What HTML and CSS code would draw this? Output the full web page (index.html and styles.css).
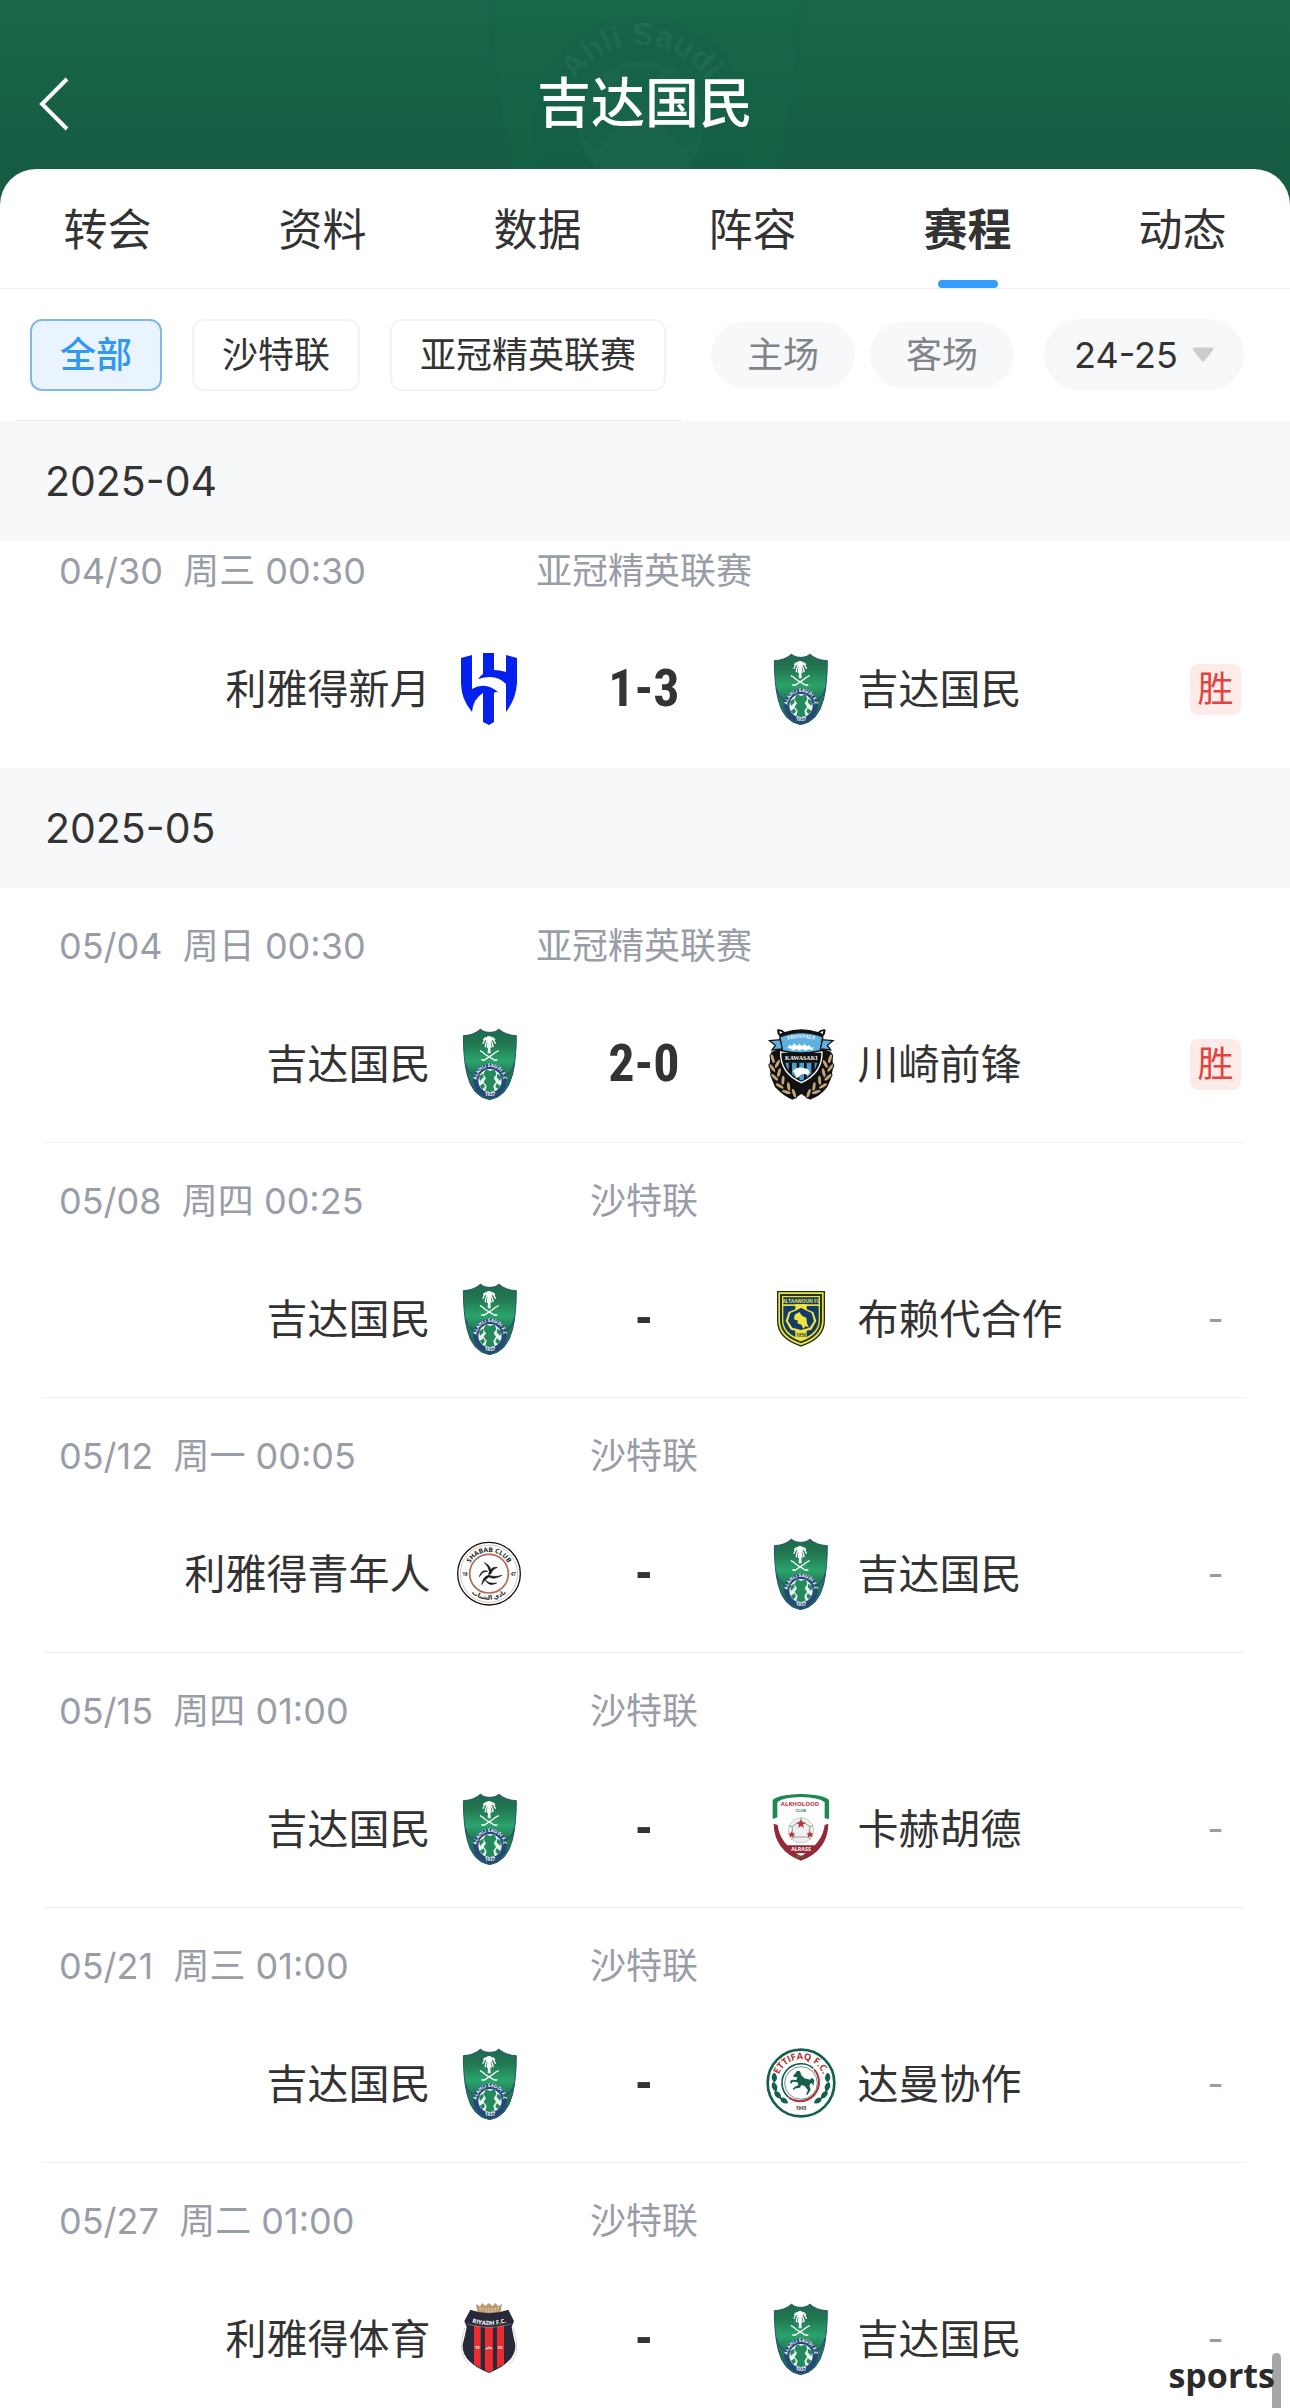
FILE: index.html
```html
<!DOCTYPE html>
<html lang="zh-CN">
<head>
<meta charset="utf-8">
<meta name="viewport" content="width=device-width, initial-scale=1">
<title>吉达国民</title>
<link rel="stylesheet" href="styles.css">
</head>
<body>
<svg class="sprite" aria-hidden="true">
  <defs>
    <linearGradient id="ahli-green" x1="0" y1="0" x2="0" y2="1">
      <stop offset="0" stop-color="#1f6a4b"/><stop offset=".2" stop-color="#217650"/>
      <stop offset=".45" stop-color="#2ba36b"/><stop offset=".62" stop-color="#237a5a"/>
      <stop offset="1" stop-color="#1d6154"/>
    </linearGradient>
    <path id="arc-ahli" d="M71 157a40 40 0 0 1 80 0"/>
    <path id="arc-shabab" d="M43 107a65 65 0 0 1 130 0"/>
    <path id="arc-shabab-low" d="M30 107a78 78 0 0 0 156 0"/>
    <path id="arc-ettifaq" d="M40 105a71 71 0 0 1 142 0"/>
    <path id="arc-riyadh" d="M48 55Q108 78 170 55"/>
    <path id="arc-kawasaki" d="M58 40Q112 20 166 40"/>
    <g id="leaf"><ellipse rx="6" ry="15" fill="#c3a77c" stroke="#111" stroke-width="3"/></g>
  </defs>
</svg>
<svg class="symbols" aria-hidden="true">
  <symbol id="ahli" viewBox="0 0 216 216">
    <path d="M31 23Q63 22 83 3Q90 13 110 13Q130 13 137 3Q158 22 190 23Q190 90 179 138Q162 207 110 215Q58 207 42 138Q31 90 31 23Z" fill="url(#ahli-green)" stroke="#285474" stroke-width="3"/>
    <path d="M37 105Q42 136 68 143M184 105Q178 136 154 143" fill="none" stroke="#285474" stroke-width="4"/>
    <path d="M61 157a50 50 0 0 1 100 0Q158 202 111 210Q64 202 61 157Z" fill="#26477a"/>
    <circle cx="111" cy="158" r="35" fill="#e9f6ef"/>
    <path d="M99 124l12 5 14-5 5 15-8 12 7 10-8 13 4 14-14 5-14-5 4-14-9-13 7-10-8-12zM78 145l12-8 2 11-11 11zM145 145l-12-8-2 11 11 11zM80 174l12-8 4 10-8 8zM143 174l-12-8-4 10 8 8z" fill="#24895c"/>
    <path d="M106 40h5l2 36h-9z" fill="#fff"/>
    <path d="M108 38Q96 26 90 46M108 38Q98 36 97 56M108 38Q104 42 103 58M108 38Q120 26 127 46M108 38Q118 36 120 56M108 38Q112 42 114 58M108 38Q101 22 92 34M108 38Q115 22 125 34" fill="none" stroke="#fff" stroke-width="4" stroke-linecap="round"/>
    <circle cx="108" cy="33" r="9" fill="#fff"/>
    <path d="M81 68Q90 72 96 79L124 96H133M137 68Q127 72 120 79L94 96H85" fill="none" stroke="#fff" stroke-width="4"/>
    <text class="crest-text" font-size="14" fill="#fff" text-anchor="middle"><textPath href="#arc-ahli" startOffset="50%">ALAHLI SAUDI F.C</textPath></text>
    <text class="crest-text" x="111" y="204" font-size="13" fill="#fff" text-anchor="middle">1937</text>
  </symbol>
  <symbol id="hilal" viewBox="0 0 72 72">
    <path d="M8 5L19 2V36Q33 28 46 40Q43 38 41 40V69L36 72L30 69V40Q20 46 19 59Q8 46 8 30ZM30 0H41V17Q47 17 53 19V2L64 5V30Q63 46 53 59V31Q43 20 25 26Q27 23 30 21Z" fill="#0420ef"/>
  </symbol>
  <symbol id="kawasaki" viewBox="0 0 216 216">
    <path d="M22 72Q8 130 33 177Q60 206 86 215L112 198L138 215Q170 204 190 177Q216 130 202 72L170 60H50Z" fill="#111"/>
    <g>
      <use href="#leaf" transform="translate(26 92) rotate(-18)"/><use href="#leaf" transform="translate(40 108) rotate(28)"/>
      <use href="#leaf" transform="translate(25 120) rotate(-35)"/><use href="#leaf" transform="translate(45 134) rotate(15)"/>
      <use href="#leaf" transform="translate(32 148) rotate(-48)"/><use href="#leaf" transform="translate(57 157) rotate(5)"/>
      <use href="#leaf" transform="translate(47 174) rotate(-60)"/><use href="#leaf" transform="translate(74 176) rotate(-8)"/>
      <use href="#leaf" transform="translate(67 192) rotate(-72)"/><use href="#leaf" transform="translate(90 196) rotate(-20)"/>
      <use href="#leaf" transform="translate(198 92) rotate(18)"/><use href="#leaf" transform="translate(184 108) rotate(-28)"/>
      <use href="#leaf" transform="translate(199 120) rotate(35)"/><use href="#leaf" transform="translate(179 134) rotate(-15)"/>
      <use href="#leaf" transform="translate(192 148) rotate(48)"/><use href="#leaf" transform="translate(167 157) rotate(-5)"/>
      <use href="#leaf" transform="translate(177 174) rotate(60)"/><use href="#leaf" transform="translate(150 176) rotate(8)"/>
      <use href="#leaf" transform="translate(157 192) rotate(72)"/><use href="#leaf" transform="translate(134 196) rotate(20)"/>
    </g>
    <path d="M50 72H174Q176 135 112 164Q48 135 50 72Z" fill="#111" stroke="#fff" stroke-width="4"/>
    <path d="M64 104h96Q154 136 112 158Q70 136 64 104Z" fill="#4a9fd0"/>
    <path d="M74 104h10v35l-10-9zM98 104h8v52l-8-5zM120 104h8v47l-8 5zM142 104h10v22l-10 12z" fill="#111"/>
    <path d="M86 130Q100 110 132 124Q142 136 130 141Q112 132 104 148L95 150Q98 140 86 130Z" fill="#fff"/>
    <path d="M40 4Q54 2 62 12Q112-5 162 12Q170 2 184 4Q186 18 178 24V68Q112 88 46 68V24Q38 18 40 4Z" fill="#111"/>
    <path d="M46 9l10 4-8 5zM178 9l-10 4 8 5z" fill="#fff"/>
    <path d="M50 28Q112 4 174 28L169 66Q112 80 55 66Z" fill="#5fb2df"/>
    <path d="M17 38L49 35L55 63L24 66L34 52ZM207 38L175 35L169 63L200 66L190 52Z" fill="#5fb2df" stroke="#111" stroke-width="4"/>
    <path d="M70 60l7-10 7 5 6-9 9 8 8-7 6 8 9-7 7 7 8-4 4 8 9-1-5 8-12-2-8 4-10-5-9 5-9-5-10 5-7-6z" fill="#fff"/>
    <text class="crest-serif" font-size="15" fill="#fff" text-anchor="middle"><textPath href="#arc-kawasaki" startOffset="50%">FRONTALE</textPath></text>
    <text class="crest-serif" x="112" y="97" font-size="18" fill="#fff" text-anchor="middle">KAWASAKI</text>
  </symbol>
  <symbol id="taawoun" viewBox="0 0 216 216">
    <path d="M39 24H183V112Q184 168 111 191Q38 168 39 112Z" fill="#1d2f20"/>
    <path d="M43 28H179V112Q180 164 111 187Q42 164 43 112Z" fill="#f1e53d"/>
    <path d="M48 33H174V112Q174 160 111 181Q48 160 48 112Z" fill="#24351f"/>
    <path d="M54 39H168V112Q168 156 111 175Q54 156 54 112Z" fill="#e8df3c"/>
    <path d="M58 43H164V64H58ZM58 69H164V112Q164 150 111 170Q58 150 58 112Z" fill="#123b6c"/>
    <path d="M94 64h34v15l20 8 9 27-15 26-14 3v24l-17 8-17-8v-24l-14-3-15-26 9-27 20-8z" fill="#f1e53d"/>
    <path d="M98 82l13-8 14 8 18 8 7 24-13 20-26 7-26-7-13-20 7-24z" fill="#123b6c"/>
    <path d="M92 95l14-8 8 11 13 6 2 17 6 13-10-5-7 8-6-12-12-4 2-8-12-4z" fill="#f1e53d"/>
    <text class="crest-text" x="111" y="60" font-size="14" fill="#f1e53d" text-anchor="middle">ALTAAWOUN FC</text>
    <text class="crest-text" x="111" y="162" font-size="13" fill="#345" text-anchor="middle">1956</text>
  </symbol>
  <symbol id="shabab" viewBox="0 0 216 216">
    <circle cx="108" cy="107" r="94" fill="#fff" stroke="#111" stroke-width="4"/>
    <circle cx="108" cy="107" r="86" fill="none" stroke="#caa195" stroke-width="2"/>
    <circle cx="108" cy="107" r="58" fill="none" stroke="#b06a55" stroke-width="5"/>
    <path d="M94 74Q118 84 112 108Q106 82 94 74M106 113Q92 113 86 140Q94 124 108 117ZM106 110Q120 120 147 112Q120 128 106 114ZM107 108Q113 85 133 88Q119 92 113 108ZM97 126Q108 139 131 135Q108 147 97 126ZM79 116Q86 93 104 100Q90 98 79 116Z" fill="#111" stroke="#111" stroke-width="2"/>
    <text class="crest-text" font-size="20" fill="#222" text-anchor="middle"><textPath href="#arc-shabab" startOffset="50%">SHABAB CLUB</textPath></text>
    <text class="crest-text" font-size="19" fill="#222" text-anchor="middle"><textPath href="#arc-shabab-low" startOffset="50%">نادي الشباب</textPath></text>
    <text class="crest-text" x="36" y="113" font-size="13" fill="#222" text-anchor="middle">19</text>
    <text class="crest-text" x="181" y="113" font-size="13" fill="#222" text-anchor="middle">47</text>
  </symbol>
  <symbol id="kholood" viewBox="0 0 216 216">
    <path d="M26 78V22Q36 6 111 3Q186 6 195 22V78L182 76V28Q165 13 111 12Q56 13 40 28V73Z" fill="#1e8752"/>
    <path d="M29 92L41 96Q46 150 111 190Q176 150 182 96L193 92Q192 172 111 203Q30 172 29 92Z" fill="#932a38"/>
    <circle cx="111" cy="112" r="38" fill="#efefef" stroke="#bbb" stroke-width="2"/>
    <path d="M111 83l-27 18 5 31h44l5-31zM111 83V73M84 101l-10-4M138 101l10-4M89 132l-7 8M133 132l7 8" fill="none" stroke="#86a795" stroke-width="3"/>
    <path d="M111 79l4 9 10 1-8 6 3 10-9-6-9 6 3-10-8-6 10-1zM83 114l3 7 8 1-6 5 2 7-7-4-7 4 2-7-6-5 8-1zM138 114l3 7 8 1-6 5 2 7-7-4-7 4 2-7-6-5 8-1z" fill="#ba3440"/>
    <path d="M64 157H158L148 181H74Z" fill="#932a38"/>
    <text class="crest-text" x="108" y="40" font-size="18" fill="#b72e3d" text-anchor="middle">ALKHOLOOD</text>
    <text class="crest-text" x="110" y="57" font-size="12" fill="#357d5b" text-anchor="middle">CLUB</text>
    <text class="crest-text" x="111" y="175" font-size="16" fill="#fff" text-anchor="middle">ALRASS</text>
    <text class="crest-text" x="109" y="194" font-size="11" fill="#357d5b" text-anchor="middle">1970</text>
  </symbol>
  <symbol id="ettifaq" viewBox="0 0 216 216">
    <circle cx="111" cy="105" r="100" fill="#fff" stroke="#145f4e" stroke-width="8"/>
    <path d="M74 148A57 57 0 1 1 148 61" fill="none" stroke="#145f4e" stroke-width="5"/>
    <path d="M150 64A57 57 0 0 1 75 149" fill="none" stroke="#b52f35" stroke-width="6"/>
    <circle cx="111" cy="105" r="49" fill="none" stroke="#145f4e" stroke-width="2"/>
    <path d="M99 68l9 2 4 12 9 9 17 4 6-6 7 8-3 17-5-10-7 8 4 14-10 15-4-2 6-12-10-13-10-3-4 8-12 2-7 5-3-4 9-7 8-3-2-9-15-2-5 7-3-8 6-5 13 1 3-9-8 1-5-4 8-9z" fill="#145f4e"/>
    <path d="M31 76q-12 12 0 25q12-12 0-25M27 104q-7 15 9 24q7-15-9-24M33 130q-2 17 16 20q2-17-16-20M50 151q3 15 20 13q-5-16-20-13M191 76q12 12 0 25q-12-12 0-25M195 104q7 15-9 24q-7-15 9-24M189 130q2 17-16 20q-2-17 16-20M172 151q-3 15-20 13q5-16 20-13" fill="#145f4e" stroke="#145f4e" stroke-width="4"/>
    <text class="crest-text" font-size="28" fill="#b52f35" text-anchor="middle"><textPath href="#arc-ettifaq" startOffset="50%">ETTIFAQ F.C.</textPath></text>
    <text class="crest-text" x="111" y="186" font-size="14" fill="#333" text-anchor="middle">1945</text>
  </symbol>
  <symbol id="riyadh" viewBox="0 0 216 216">
    <path d="M69 3l12 7 7-10 9 9 11-9 10 9 10-9 7 10 12-7-4 24q-35 10-70 0z" fill="#bd986f"/>
    <path d="M79 14q29 9 58 0M80 21q28 8 56 0" fill="none" stroke="#fff" stroke-width="2" stroke-dasharray="5 4"/>
    <path d="M52 20Q108 41 166 20L183 54L176 72Q180 95 187 125Q190 177 108 210Q26 177 29 125Q37 95 41 72L34 54Z" fill="#282a39"/>
    <path d="M36 74Q26 105 26 135Q28 165 48 184M180 74Q190 105 191 135Q188 165 168 184" fill="none" stroke="#999" stroke-width="2" stroke-dasharray="6 3"/>
    <path d="M63 66L83 70V196L63 184ZM96 71H120V202L108 208L96 202ZM132 70L153 66V184L132 195Z" fill="#e92d31"/>
    <path d="M42 63Q108 84 175 63" fill="none" stroke="#8c8d95" stroke-width="2"/>
    <text class="crest-text" font-size="18" fill="#fff" text-anchor="middle"><textPath href="#arc-riyadh" startOffset="50%">RIYADH F.C.</textPath></text>
    <text class="crest-text" font-size="12" fill="#fff" text-anchor="middle"><tspan x="73" y="138">19</tspan><tspan x="108" y="138">عام</tspan><tspan x="142" y="138">53</tspan></text>
  </symbol>
</svg>

<div class="top">
  <header class="bar">
    <svg class="bar-crest" viewBox="0 0 330 169" aria-hidden="true">
      <defs><path id="arc-bar" d="M82 124a79 79 0 0 1 158 0"/></defs>
      <path d="M9 0Q12 90 34 169H296Q318 90 321 0" fill="#12694a" fill-opacity=".3" stroke="#245a60" stroke-opacity=".15" stroke-width="4"/>
      <circle cx="161" cy="124" r="108" fill="#1b5a50" fill-opacity=".2"/>
      <circle cx="161" cy="124" r="63" fill="#2b7958" fill-opacity=".2"/>
      <path d="M139 68h44l-10 26h-24zM102 115l25-14 10 26-17 22-16-9zM220 115l-25-14-10 26 17 22 16-9z" fill="#0e6142" fill-opacity=".3"/>
      <text class="bar-crest-text" text-anchor="middle"><textPath href="#arc-bar" startOffset="50%">Ahli Saudi</textPath></text>
    </svg>
    <button class="back" type="button" aria-label="返回"><svg viewBox="0 0 30 54"><path d="M28 2L3 27L28 52"/></svg></button>
    <h1>吉达国民</h1>
  </header>
  <nav class="tabs">
    <a href="#transfer">转会</a>
    <a href="#info">资料</a>
    <a href="#data">数据</a>
    <a href="#squad">阵容</a>
    <a href="#schedule" class="active" aria-current="page">赛程</a>
    <a href="#news">动态</a>
  </nav>
</div>

<div class="filters">
  <div class="leagues">
    <button type="button" class="chip chip-on">全部</button>
    <button type="button" class="chip">沙特联</button>
    <button type="button" class="chip">亚冠精英联赛</button>
  </div>
  <div class="venues">
    <button type="button" class="pill">主场</button>
    <button type="button" class="pill">客场</button>
  </div>
  <div class="season">
    <select aria-label="赛季"><option>24-25</option></select>
    <svg viewBox="0 0 24 16" aria-hidden="true"><path d="M3 2H21L12 13Z"/></svg>
  </div>
</div>

<main id="schedule">
  <section>
    <h2>2025-04</h2>
    <ul>
      <li class="row row-tucked">
        <div class="meta"><time>04/30&nbsp; 周三 00:30</time><span>亚冠精英联赛</span></div>
        <div class="match"><span class="home">利雅得新月</span><svg class="logo"><use href="#hilal"/></svg><strong>1-3</strong><svg class="logo"><use href="#ahli"/></svg><span class="away">吉达国民</span><span class="result win">胜</span></div>
      </li>
    </ul>
  </section>
  <section>
    <h2>2025-05</h2>
    <ul>
      <li class="row">
        <div class="meta"><time>05/04&nbsp; 周日 00:30</time><span>亚冠精英联赛</span></div>
        <div class="match"><span class="home">吉达国民</span><svg class="logo"><use href="#ahli"/></svg><strong>2-0</strong><svg class="logo"><use href="#kawasaki"/></svg><span class="away">川崎前锋</span><span class="result win">胜</span></div>
      </li>
      <li class="row">
        <div class="meta"><time>05/08&nbsp; 周四 00:25</time><span>沙特联</span></div>
        <div class="match"><span class="home">吉达国民</span><svg class="logo"><use href="#ahli"/></svg><strong>-</strong><svg class="logo"><use href="#taawoun"/></svg><span class="away">布赖代合作</span><span class="result">-</span></div>
      </li>
      <li class="row">
        <div class="meta"><time>05/12&nbsp; 周一 00:05</time><span>沙特联</span></div>
        <div class="match"><span class="home">利雅得青年人</span><svg class="logo"><use href="#shabab"/></svg><strong>-</strong><svg class="logo"><use href="#ahli"/></svg><span class="away">吉达国民</span><span class="result">-</span></div>
      </li>
      <li class="row">
        <div class="meta"><time>05/15&nbsp; 周四 01:00</time><span>沙特联</span></div>
        <div class="match"><span class="home">吉达国民</span><svg class="logo"><use href="#ahli"/></svg><strong>-</strong><svg class="logo"><use href="#kholood"/></svg><span class="away">卡赫胡德</span><span class="result">-</span></div>
      </li>
      <li class="row">
        <div class="meta"><time>05/21&nbsp; 周三 01:00</time><span>沙特联</span></div>
        <div class="match"><span class="home">吉达国民</span><svg class="logo"><use href="#ahli"/></svg><strong>-</strong><svg class="logo"><use href="#ettifaq"/></svg><span class="away">达曼协作</span><span class="result">-</span></div>
      </li>
      <li class="row row-end">
        <div class="meta"><time>05/27&nbsp; 周二 01:00</time><span>沙特联</span></div>
        <div class="match"><span class="home">利雅得体育</span><svg class="logo"><use href="#riyadh"/></svg><strong>-</strong><svg class="logo"><use href="#ahli"/></svg><span class="away">吉达国民</span><span class="result">-</span></div>
      </li>
    </ul>
  </section>
</main>
<div class="scroll-thumb"></div>
<div class="brand">sports</div>
</body>
</html>
```
FILE: styles.css
```css
* { box-sizing: border-box; }
body {
  position: relative;
  margin: 0;
  background: #fff;
  color: #333;
  font-family: Inter, "Noto Sans CJK SC", sans-serif;
  font-size: 36px;
  line-height: 48px;
}
h1, h2, ul { margin: 0; padding: 0; font-weight: 400; }
ul { list-style: none; }
button, select { font: inherit; color: inherit; margin: 0; border: 0; }
button { padding: 0; background: none; }
a { color: inherit; text-decoration: none; }
.sprite { position: absolute; width: 0; height: 0; }
.symbols { display: none; }
.crest-text { font-family: "Open Sans", "DejaVu Sans", sans-serif; font-weight: 700; }
.crest-serif { font-family: "Liberation Serif", serif; font-weight: 700; }

.top { background: linear-gradient(#196748, #165c42 168px, #16623f); }
.bar {
  position: relative;
  display: grid;
  grid-template-columns: 1fr auto 1fr;
  align-items: center;
  padding: 68px 39px 29px;
  color: #fff;
}
.bar-crest { position: absolute; top: 0; left: 50%; width: 330px; height: 169px; margin-left: -165px; }
.bar-crest-text { font-family: "Liberation Sans", sans-serif; font-size: 32px; font-weight: 700; fill: #37805f; fill-opacity: .3; }
.back { width: 30px; height: 54px; }
.back svg { display: block; width: 30px; height: 54px; fill: none; stroke: #fff; stroke-width: 4; }
.bar h1 { position: relative; font-size: 54px; font-weight: 500; line-height: 72px; }

.tabs {
  display: grid;
  grid-template-columns: repeat(6, 1fr);
  background: #fff;
  border-bottom: 1px solid #eee;
  border-radius: 36px 36px 0 0;
}
.tabs a {
  display: flex;
  flex-direction: column;
  align-items: center;
  padding-top: 31px;
  height: 119px;
  font-size: 44px;
  line-height: 60px;
}
.tabs .active { font-weight: 700; }
.tabs .active::after { content: ""; width: 60px; height: 8px; margin-top: auto; border-radius: 4px; background: #339dff; }

.filters { position: relative; display: flex; align-items: center; padding: 30px; }
.filters::after { content: ""; position: absolute; left: 16px; bottom: 0; width: 666px; height: 1px; background: #e8eaed; }
.leagues { display: flex; gap: 30px; }
.chip { height: 72px; padding: 0 28px; border: 2px solid #f3f4f5; border-radius: 12px; }
.chip-on { border-color: #7fb9e6; background: #e9f4ff; color: #3297f0; font-weight: 500; }
.venues { display: flex; gap: 15px; margin-left: 45px; }
.pill { height: 66px; padding: 0 36px; border-radius: 33px; background: #f7f8fa; color: #808388; }
.season { position: relative; margin-left: 30px; }
.season select { display: block; width: 200px; height: 72px; padding: 0 30px; border-radius: 36px; background: #f7f8fa; appearance: none; }
.season svg { position: absolute; right: 29px; top: 28px; width: 24px; height: 16px; fill: #ccc; stroke: #ccc; stroke-width: 3; stroke-linejoin: round; pointer-events: none; }

h2 { padding: 30px 45px; background: #f7f8fa; font-size: 41px; line-height: 60px; }
.row { margin: 0 45px 0 43px; padding: 34px 4px 42px; border-bottom: 1px solid #eee; }
.row:last-child { border-color: transparent; }
.row-tucked { padding-top: 6px; }
.row-end { padding-bottom: 32px; }
.meta { display: grid; grid-template-columns: 1fr auto 1fr; padding: 0 12px; color: #999da8; }
.match {
  display: grid;
  grid-template-columns: minmax(0, 1fr) 72px 195px 72px minmax(0, 1fr);
  column-gap: 22px;
  align-items: center;
  margin-top: 58px;
  height: 72px;
  font-size: 41px;
}
.home { text-align: right; }
.logo { width: 72px; height: 72px; }
.match strong { font-family: "Liberation Sans Narrow", "Roboto Condensed", Roboto, sans-serif; font-size: 52px; font-weight: 700; text-align: center; }
.away, .result { grid-row: 1; grid-column: 5; }
.result { justify-self: end; width: 51px; font-size: 36px; line-height: 51px; text-align: center; color: #999da8; }
.win { border-radius: 8px; background: #fdebea; color: #e0443e; }

.scroll-thumb { position: absolute; right: 9px; bottom: 0; width: 9px; height: 55px; border-radius: 5px 5px 0 0; background: #a6a6a6; }
.brand { position: absolute; right: 15px; bottom: 9px; color: #2b2b2b; font-family: "Open Sans", sans-serif; font-size: 34px; font-weight: 700; }
```
